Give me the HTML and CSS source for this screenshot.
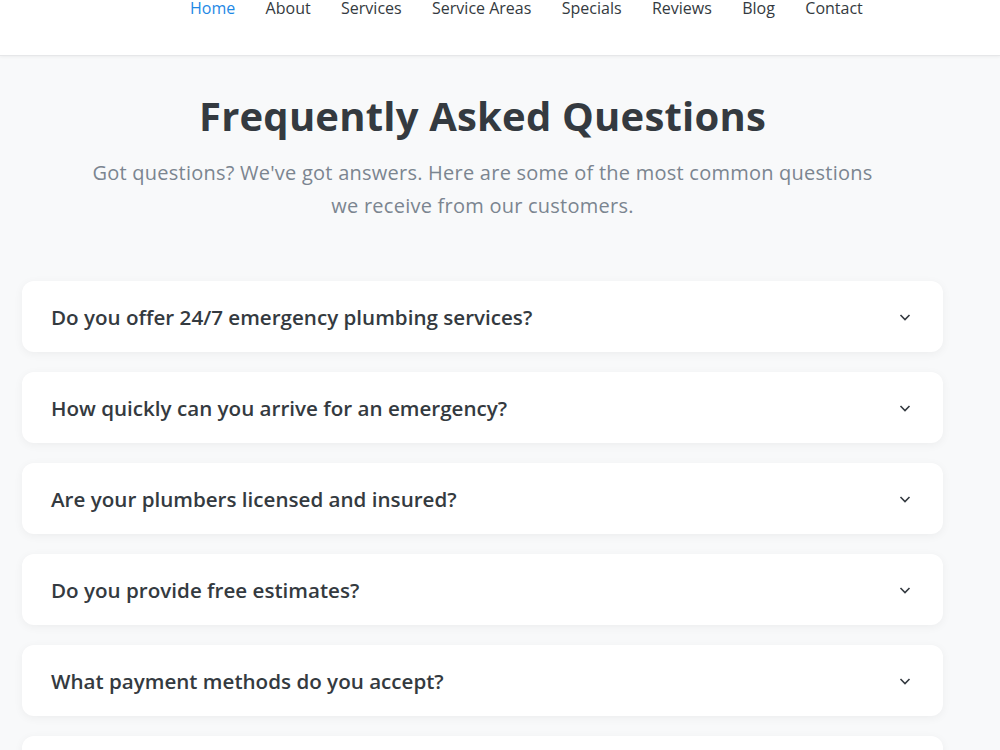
FILE: index.html
```html
<!DOCTYPE html>
<html lang="en">
<head>
    <meta charset="UTF-8">
    <meta name="viewport" content="width=device-width, initial-scale=1.0">
    <title>FAQ</title>
    <link rel="stylesheet" href="styles.css">
</head>
<body>
    <header class="site-header">
        <nav class="main-nav">
            <a href="#" class="active">Home</a>
            <a href="#">About</a>
            <a href="#">Services</a>
            <a href="#">Service Areas</a>
            <a href="#">Specials</a>
            <a href="#">Reviews</a>
            <a href="#">Blog</a>
            <a href="#">Contact</a>
        </nav>
    </header>

    <section class="faq-section">
        <div class="container">
            <h2>Frequently Asked Questions</h2>
            <p class="intro">Got questions? We've got answers. Here are some of the most common questions we receive from our customers.</p>

            <div class="faq-list">
                <div class="faq-item">
                    <span>Do you offer 24/7 emergency plumbing services?</span>
                    <svg class="chevron" viewBox="0 0 16 16"><path d="M3.5 6l4.5 4.5L12.5 6"/></svg>
                </div>
                <div class="faq-item">
                    <span>How quickly can you arrive for an emergency?</span>
                    <svg class="chevron" viewBox="0 0 16 16"><path d="M3.5 6l4.5 4.5L12.5 6"/></svg>
                </div>
                <div class="faq-item">
                    <span>Are your plumbers licensed and insured?</span>
                    <svg class="chevron" viewBox="0 0 16 16"><path d="M3.5 6l4.5 4.5L12.5 6"/></svg>
                </div>
                <div class="faq-item">
                    <span>Do you provide free estimates?</span>
                    <svg class="chevron" viewBox="0 0 16 16"><path d="M3.5 6l4.5 4.5L12.5 6"/></svg>
                </div>
                <div class="faq-item">
                    <span>What payment methods do you accept?</span>
                    <svg class="chevron" viewBox="0 0 16 16"><path d="M3.5 6l4.5 4.5L12.5 6"/></svg>
                </div>
                <div class="faq-item">
                    <span>Do you offer any warranties on your work?</span>
                    <svg class="chevron" viewBox="0 0 16 16"><path d="M3.5 6l4.5 4.5L12.5 6"/></svg>
                </div>
            </div>
        </div>
    </section>
</body>
</html>
```

FILE: styles.css
```css
body {
    margin: 0;
    font-family: "Open Sans", "Noto Sans", sans-serif;
    background-color: #f8f9fa;
    color: #343a40;
}
.site-header {
    background-color: white;
    height: 55px;
    border-bottom: 1px solid #e6e7e9;
    box-shadow: 0 1px 3px rgba(0,0,0,0.05);
}
.main-nav {
    display: flex;
    gap: 30.4px;
    padding-left: 190px;
    position: relative;
    top: -4px;
}
.main-nav a {
    color: #343a40;
    text-decoration: none;
    font-size: 16px;
    line-height: 24px;
}
.main-nav a.active {
    color: #1e88e5;
}
.faq-section {
    padding-top: 34px;
}
.container {
    width: 921px;
    margin-left: 22px;
}
h2 {
    text-align: center;
    font-size: 40px;
    font-weight: 700;
    letter-spacing: 0.2px;
    color: #343a40;
    margin: 0 0 14px;
    line-height: 1.3;
}
.intro {
    text-align: center;
    font-size: 20px;
    letter-spacing: 0.24px;
    line-height: 33px;
    color: #7b8590;
    max-width: 800px;
    margin: 0 auto 59px;
}
.faq-list {
    display: flex;
    flex-direction: column;
    gap: 20px;
}
.faq-item {
    background-color: white;
    border-radius: 12px;
    box-shadow: 0 2px 10px rgba(0,0,0,0.05);
    height: 71px;
    padding: 0 30px 0 29px;
    display: flex;
    align-items: center;
    justify-content: space-between;
    font-size: 20.6px;
    font-weight: 600;
    box-sizing: border-box;
}
.chevron {
    width: 16px;
    height: 16px;
    fill: none;
    stroke: #343a40;
    stroke-width: 1.6;
}
```
